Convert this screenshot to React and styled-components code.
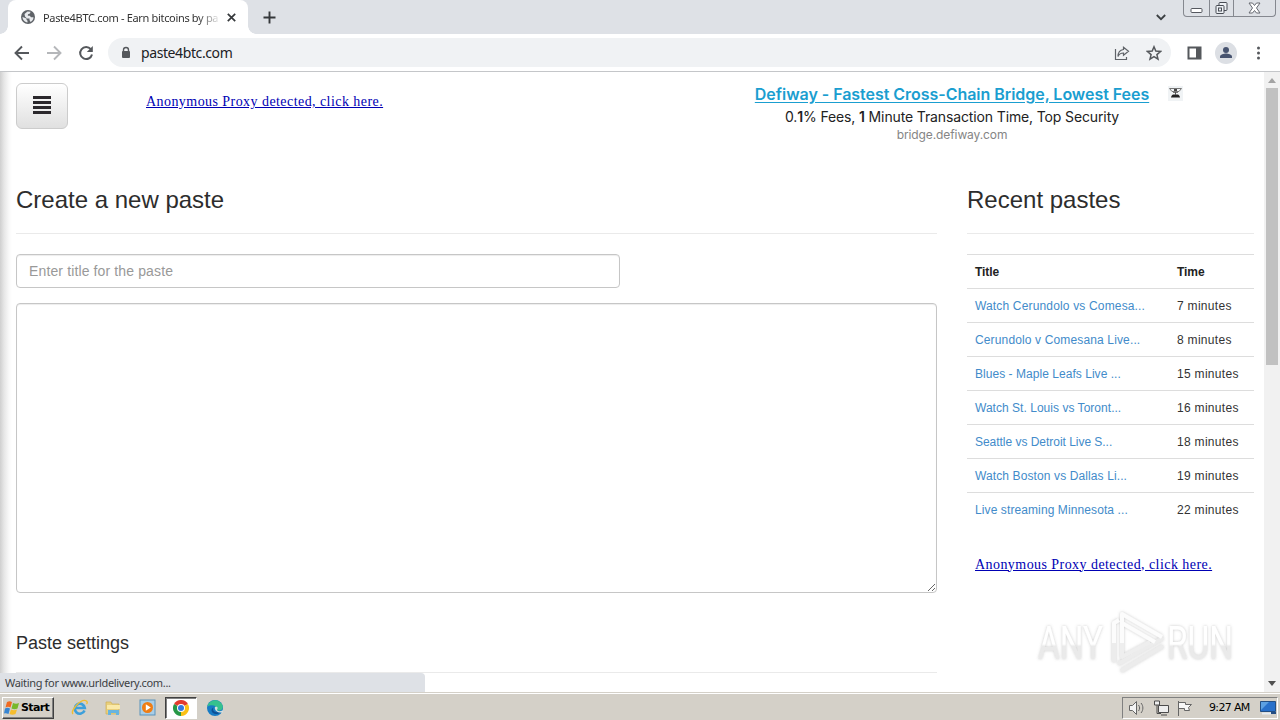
import styled, { createGlobalStyle } from "styled-components";

const GlobalStyle = createGlobalStyle`
  * {
    box-sizing: border-box;
  }

  body {
    margin: 0;
    overflow: hidden;
    background: white;
  }
`;

const Screen = styled.div`
  display: flex;
  flex-direction: column;
  width: 1280px;
  height: 720px;
  overflow: hidden;
  font-family: "Liberation Sans", Arial, sans-serif;
  color: #333;
`;

const TabStrip = styled.div`
  display: flex;
  height: 34px;
  padding-left: 8px;
  background: #dee1e6;
`;

const Tab = styled.div`
  position: relative;
  display: flex;
  align-items: center;
  width: 240px;
  padding: 0 12px 0 13px;
  background: white;
  border-radius: 8px 8px 0 0;

  &::before,
  &::after {
    content: "";
    position: absolute;
    bottom: 0;
    width: 8px;
    height: 8px;
  }

  &::before {
    left: -8px;
    background: radial-gradient(circle at 0 0, #dee1e6 7.5px, white 8px);
  }

  &::after {
    right: -8px;
    background: radial-gradient(circle at 100% 0, #dee1e6 7.5px, white 8px);
  }
`;

const TabTitle = styled.span`
  flex: 1;
  margin: 0 8px 0 8px;
  white-space: nowrap;
  font: 11px "Noto Sans", sans-serif;
  letter-spacing: -0.33px;
  color: #333;
  mask-image: linear-gradient(to right, black 155px, transparent 178px);
`;

const NewTab = styled.div`
  display: flex;
  align-items: center;
  margin-left: 15px;
`;

const TabSearch = styled.div`
  display: flex;
  align-items: center;
  margin-left: auto;
  margin-right: 17px;
`;

const WindowControls = styled.div`
  display: flex;
  width: 93px;
  height: 17px;
  margin-right: 4px;
  border: 1px solid #85888f;
  border-top: 0;
  border-radius: 0 0 4px 4px;
`;

const WindowButton = styled.div`
  display: flex;
  align-items: center;
  justify-content: center;
  width: ${(props) => props.$width}px;

  & + & {
    border-left: 1px solid #85888f;
  }
`;

const Toolbar = styled.div`
  display: flex;
  align-items: center;
  height: 38px;
  padding: 0 12px 0 14px;
  background: white;
  border-bottom: 1px solid #c4c6c9;
`;

const NavButtons = styled.div`
  display: flex;
  gap: 16px;
`;

const AddressBar = styled.div`
  display: flex;
  align-items: center;
  width: 1063px;
  height: 29px;
  margin-left: 14px;
  padding: 0 9px 0 12px;
  background: #f0f2f4;
  border-radius: 15px;
`;

const Url = styled.span`
  flex: 1;
  margin-left: 9px;
  font: 14px "Noto Sans", sans-serif;
  letter-spacing: -0.4px;
  color: #202124;
`;

const AddressIcons = styled.div`
  display: flex;
  gap: 16px;
`;

const ToolbarIcons = styled.div`
  display: flex;
  align-items: center;
  margin-left: 16px;
`;

const Avatar = styled.div`
  display: flex;
  width: 22px;
  height: 22px;
  margin: 0 15px 0 13px;
`;

const Viewport = styled.div`
  position: relative;
  display: flex;
  height: 620px;
  overflow: hidden;
`;

const Page = styled.main`
  width: 1264px;
  height: 620px;
  padding: 11px 10px 0 16px;
  overflow: hidden;
  background: linear-gradient(to right, #cfcfcf 0, #e6e6e6 4px, #f9f9f9 9px, white 12px);
`;

const Header = styled.header`
  display: flex;
  height: 89px;

  & > * {
    flex-shrink: 0;
  }
`;

const MenuButton = styled.button`
  display: flex;
  flex-direction: column;
  align-items: center;
  justify-content: center;
  gap: 2px;
  width: 52px;
  height: 46px;
  padding: 0 0 3px;
  border: 1px solid #ccc;
  border-radius: 6px;
  background: linear-gradient(#fff, #e0e0e0);
`;

const MenuLine = styled.span`
  width: 18px;
  height: 3px;
  background: #2b282c;
`;

const ProxyLink = styled.a`
  font: 14px/16px "Liberation Serif", serif;
  letter-spacing: 0.44px;
  white-space: nowrap;
  text-decoration: underline;
  color: #0000b4;
`;

const HeaderProxy = styled.div`
  width: 610px;
  padding: 9px 0 0 78px;
`;

const Advert = styled.div`
  display: flex;
  flex-direction: column;
  align-items: center;
  width: 394px;
  margin-left: 77px;
  white-space: nowrap;
`;

const AdTitle = styled.a`
  font: 600 16px/20px Inter, sans-serif;
  letter-spacing: -0.04px;
  text-decoration: underline;
  text-underline-offset: 2px;
  color: #1a9ed0;
  margin-top: 1px;
`;

const AdText = styled.div`
  font: 14px/20px Inter, sans-serif;
  letter-spacing: -0.13px;
  margin-top: 3px;
  color: #222;

  b {
    font-weight: 600;
  }
`;

const AdSite = styled.div`
  font: 12px/16px Inter, sans-serif;
  letter-spacing: -0.1px;
  color: #858585;
`;

const AdBadge = styled.div`
  margin: 3px 0 0 19px;
`;

const Columns = styled.div`
  display: flex;
  justify-content: space-between;
`;

const PasteForm = styled.section`
  width: 921px;
`;

const Recent = styled.aside`
  width: 287px;
`;

const Heading = styled.h3`
  height: 62px;
  margin: 0 0 20px;
  padding-top: 14px;
  border-bottom: 1px solid #eaeaea;
  font-size: 24px;
  font-weight: 400;
  line-height: 28px;
  color: #2d2d2d;
`;

const TitleInput = styled.input`
  display: block;
  width: 604px;
  height: 34px;
  padding: 6px 12px;
  border: 1px solid #c6c6c6;
  border-radius: 4px;
  font: 14px "Liberation Sans", Arial, sans-serif;
  letter-spacing: 0.13px;
  box-shadow: inset 0 1px 1px rgba(0, 0, 0, 0.075);

  &::placeholder {
    color: #999;
  }
`;

const PasteArea = styled.textarea`
  display: block;
  width: 921px;
  height: 290px;
  margin-top: 15px;
  border: 1px solid #c6c6c6;
  border-radius: 4px;
  box-shadow: inset 0 1px 1px rgba(0, 0, 0, 0.075);
`;

const SettingsHeading = styled.h4`
  height: 42px;
  margin: 38px 0 0;
  padding-top: 2px;
  border-bottom: 1px solid #eaeaea;
  font-size: 18px;
  font-weight: 400;
  line-height: 20px;
  color: #2d2d2d;
`;

const PasteTable = styled.table`
  width: 287px;
  border-collapse: collapse;
  table-layout: fixed;
  font-size: 12px;
  line-height: 17px;
`;

const Cell = styled.td`
  width: ${(props) => props.$width}px;
  height: 34px;
  padding: 2px 8px 0;
  border-top: 1px solid #ddd;
  text-align: left;
  white-space: nowrap;
  letter-spacing: 0.3px;
  color: #333;
`;

const HeadCell = styled(Cell)`
  letter-spacing: -0.05px;
  color: #222;
`;

const PasteLink = styled.a`
  letter-spacing: ${(props) => props.$spacing}px;
  color: #428bca;
`;

const RecentProxy = styled.div`
  padding: 28px 0 0 8px;
`;

const Scrollbar = styled.div`
  display: flex;
  flex-direction: column;
  align-items: center;
  width: 16px;
  height: 620px;
  padding: 6px 0 6px;
  background: #f1f1f1;
`;

const ScrollThumb = styled.div`
  width: 12px;
  height: 277px;
  margin-top: 5px;
  margin-bottom: auto;
  background: #c1c1c1;
`;

const StatusBubble = styled.div`
  position: absolute;
  left: 0;
  bottom: 0;
  width: 425px;
  height: 19px;
  padding-left: 5px;
  border-top-right-radius: 4px;
  background: #dee1e6;
  font: 11px/20px "Noto Sans", sans-serif;
  letter-spacing: -0.33px;
  color: #3c4043;
`;

const Watermark = styled.svg`
  position: absolute;
  left: 1030px;
  top: 533px;
`;

const Taskbar = styled.footer`
  display: flex;
  align-items: center;
  height: 28px;
  padding: 2px 2px 0;
  background: #d4d0c8;
  border-top: 1px solid #d4d0c8;
  box-shadow: inset 0 1px white;
`;

const StartButton = styled.button`
  display: flex;
  align-items: center;
  gap: 1px;
  width: 52px;
  height: 22px;
  padding: 0 1px;
  border: 1px solid;
  border-color: white #404040 #404040 white;
  box-shadow: inset -1px -1px #808080;
  background: #d4d0c8;
  font: bold 11px "DejaVu Sans", sans-serif;
  letter-spacing: -0.65px;
  color: black;
`;

const Launcher = styled.div`
  display: flex;
  align-items: center;
  justify-content: center;
  width: ${(props) => (props.$active ? 32 : 34)}px;
  height: 22px;
  margin-right: ${(props) => (props.$active ? 1 : 0)}px;
  margin-left: ${(props) => (props.$active ? 1 : 0)}px;
  border: ${(props) => (props.$active ? "1px solid" : "0")};
  border-color: #404040 white white #404040;
  box-shadow: ${(props) => (props.$active ? "inset 1px 1px #808080" : "none")};
  background: ${(props) => (props.$active ? "white" : "none")};
`;

const Launchers = styled.div`
  display: flex;
  margin-left: 8px;
`;

const Tray = styled.div`
  display: flex;
  align-items: center;
  width: 156px;
  height: 22px;
  margin-left: auto;
  padding-left: 5px;
  border: 1px solid;
  border-color: #808080 white white #808080;
`;

const Clock = styled.span`
  margin: 0 10px 0 15px;
  white-space: nowrap;
  font: 11px "DejaVu Sans", sans-serif;
  letter-spacing: -0.65px;
  color: black;
`;

const GlobeIcon = () => (
  <svg width="14" height="14" viewBox="0 0 14 14">
    <circle cx="7" cy="7" r="7" fill="#5f6368" />
    <path d="M1.500 7l4 1.500v1.200l1 1v1.800C3.500 12.200 1.500 9.500 1.500 7zM6.500 1.500l3 .2-.5 1.800-2 .8-.2 1.500h2l1.200 1.500h2.500c0 2.500-1.500 4-3 4.700L8.500 10V8.500H6L4 6.500 3.500 4z" fill="#e8eaed" />
  </svg>
);

const CloseIcon = () => (
  <svg width="9" height="9" viewBox="0 0 9 9" stroke="#35383b" strokeWidth="1.700">
    <path d="M.8.8l7.400 7.400M8.200.8L.8 8.200" />
  </svg>
);

const ArrowIcon = ({ color, flip }) => (
  <svg width="16" height="16" viewBox="0 0 16 16" fill="none" stroke={color} strokeWidth="1.900">
    <path d={flip ? "M1 8h13M8 1.500L14.500 8 8 14.500" : "M15 8H2M8 1.500L1.500 8 8 14.500"} />
  </svg>
);

const ReloadIcon = () => (
  <svg width="16" height="16" viewBox="0 0 16 16">
    <path d="M12.800 4.200A6 6 0 1 0 14 9.500" fill="none" stroke="#55585c" strokeWidth="2" />
    <path d="M14.800 1v6H8.800z" fill="#55585c" />
  </svg>
);

const LockIcon = () => (
  <svg width="12" height="14" viewBox="0 0 12 14">
    <path d="M3.500 6V4a2.500 2.500 0 0 1 5 0v2" fill="none" stroke="#55585c" strokeWidth="1.400" />
    <rect x="2" y="5" width="8" height="7" rx="1" fill="#55585c" />
  </svg>
);

const ShareIcon = () => (
  <svg width="16" height="16" viewBox="0 0 16 16" fill="none" stroke="#5f6368" strokeWidth="1.200">
    <path d="M1.500 4v10.500h11V12M9.500 2.200l5 4-5 4V8C7 8 5 9 4 11.500c0-4 2-6.500 5.500-7z" />
  </svg>
);

const StarIcon = () => (
  <svg width="16" height="16" viewBox="0 0 16 16" fill="none" stroke="#55585c" strokeWidth="1.500">
    <path d="M8 1.800l1.800 4.300 4.700.4-3.600 3.100 1.100 4.600-4-2.500-4 2.500 1.100-4.600-3.600-3.100 4.700-.4z" />
  </svg>
);

const WatermarkLogo = () => (
  <Watermark width="210" height="72" viewBox="0 0 210 72">
    <defs>
      <filter id="glow" x="-10%" y="-10%" width="120%" height="120%">
        <feDropShadow dx="0" dy="0" stdDeviation="1.800" floodColor="#888" floodOpacity=".45" />
      </filter>
      <linearGradient id="fade" x2="0" y2="1">
        <stop offset=".52" stopColor="#fff" />
        <stop offset=".56" stopColor="#eaeaea" />
      </linearGradient>
    </defs>
    <g filter="url(#glow)" fill="none" strokeWidth="4" strokeLinejoin="round">
      <g fill="url(#fade)" fontFamily="Roboto, sans-serif" fontSize="46">
        <text x="8" y="54" textLength="65" lengthAdjust="spacingAndGlyphs">ANY</text>
        <text x="137" y="54" textLength="66" lengthAdjust="spacingAndGlyphs">RUN</text>
      </g>
      <path d="M84 17v40M88 59l45-26M91 66l42-25" stroke="#ececec" />
      <path d="M84 38V18l5-3M92 52V9l40 23" stroke="#fcfcfc" />
      <path d="M92 38v14l28-15" stroke="#eee" />
      <path d="M92 18l33 19" stroke="#fcfcfc" />
    </g>
  </Watermark>
);

const StartLogo = () => (
  <svg width="16" height="16" viewBox="0 0 16 16">
    <path d="M3 2c2-1 3-1 5 0L6.500 7.500c-2-1-3-1-5 0z" fill="#f06a20" />
    <path d="M9 3c2 1 4 1 6 0l-1.500 5.500c-2 1-4 1-6 0z" fill="#78b82c" />
    <path d="M1 8.500c2-1 3-1 5 0L4.500 14c-2-1-3-1-4.500-.5z" fill="#3785d2" />
    <path d="M7 9.500c2 1 4 1 6 0L11.500 14c-2 1-4 1-6 0z" fill="#f6bd2e" />
  </svg>
);

const ExplorerIcon = () => (
  <svg width="17" height="17" viewBox="0 0 17 17" fill="none">
    <path d="M13.500 11.500A5 5 0 1 1 13.800 9H4" stroke="#3c9fdb" strokeWidth="2.600" />
    <path d="M2 15C-1 12 10-1 15.500 2c1 1 .5 2.500 0 3" stroke="#efbd32" strokeWidth="1.300" />
  </svg>
);

const FolderIcon = () => (
  <svg width="18" height="17" viewBox="0 0 18 17">
    <path d="M2 3h5l1 2h7v10H2z" fill="#e9cf7c" stroke="#cfb058" strokeWidth=".7" />
    <path d="M3 6h13v4H3z" fill="#fae9a8" />
    <path d="M4 16v-5h11v5h-3v-2H7v2z" fill="#67b4df" />
  </svg>
);

const PlayerIcon = () => (
  <svg width="17" height="17" viewBox="0 0 17 17">
    <rect x="1" y="1" width="15" height="15" fill="#a9cee7" stroke="#5b93bb" />
    <circle cx="8.500" cy="8.500" r="5.500" fill="#ef7d14" />
    <path d="M6.800 5.200l5 3.300-5 3.300z" fill="white" />
  </svg>
);

const ChromeIcon = () => (
  <svg width="16" height="16" viewBox="0 0 16 16">
    <path d="M8 8L1.070 4A8 8 0 0 1 14.930 4z" fill="#e33b2e" />
    <path d="M8 8V16A8 8 0 0 1 1.070 4z" fill="#279847" />
    <path d="M8 8L14.930 4A8 8 0 0 1 8 16z" fill="#fbc116" />
    <circle cx="8" cy="8" r="4" fill="white" />
    <circle cx="8" cy="8" r="3" fill="#3479e0" />
  </svg>
);

const EdgeIcon = () => (
  <svg width="16" height="16" viewBox="0 0 16 16">
    <circle cx="8" cy="8" r="8" fill="#167bc4" />
    <path d="M.3 6.500C2 0 9-1.500 13 2c3 2.500 4 6 1 8-2 1.200-4.500.5-4.500-1C10 5 4 4 .3 6.500z" fill="#36c18e" />
    <path d="M6.500 7.500c-2 4 3 6 7.500 4-3 4-9 3-9.500-1 0-1.500.8-2.500 2-3z" fill="#0d4f94" />
    <path d="M8 7c2-1 3.500.5 2 2.500 0 2 3 2 5.500 1l1-.5v2.500h-2C10 13 7 9.500 8 7z" fill="#d4e0e0" />
  </svg>
);

const TrayIcons = () => (
  <svg width="66" height="18" viewBox="0 0 66 18" fill="none" stroke="#666">
    <path d="M1.500 6.500h3l4-4v13l-4-4h-3z" fill="#f4f4f4" />
    <path d="M10.500 6c1.500 2 1.500 4 0 6M13 4c2.500 3 2.500 7 0 10" />
    <path d="M30.500 6.500h10v7h-10zM33 16h6M26.500 2v4h5V2z" fill="#eee" stroke="#4c4c4c" />
    <path d="M29 6v8.500h4" stroke="#4c4c4c" />
    <path d="M50.500 2v15M50.500 3.500h7v2h6l-3 3 1 3h-5v-2h-6z" fill="#f7f7f7" />
  </svg>
);

const pastes = [
  { title: "Watch Cerundolo vs Comesa...", time: "7 minutes", spacing: 0.16 },
  { title: "Cerundolo v Comesana Live...", time: "8 minutes", spacing: 0.14 },
  { title: "Blues - Maple Leafs Live ...", time: "15 minutes", spacing: 0.04 },
  { title: "Watch St. Louis vs Toront...", time: "16 minutes", spacing: 0.03 },
  { title: "Seattle vs Detroit Live S...", time: "18 minutes", spacing: -0.03 },
  { title: "Watch Boston vs Dallas Li...", time: "19 minutes", spacing: 0.11 },
  { title: "Live streaming Minnesota ...", time: "22 minutes", spacing: 0.1 },
];

const BrowserTop = () => (
  <>
    <TabStrip>
      <Tab>
        <GlobeIcon />
        <TabTitle>Paste4BTC.com - Earn bitcoins by pa</TabTitle>
        <CloseIcon />
      </Tab>
      <NewTab>
        <svg width="13" height="13" viewBox="0 0 13 13" stroke="#35383b" strokeWidth="1.900">
          <path d="M6.500.5v12M.5 6.500h12" />
        </svg>
      </NewTab>
      <TabSearch>
        <svg width="10" height="7" viewBox="0 0 10 7" fill="none" stroke="#3c4043" strokeWidth="1.800">
          <path d="M.8 1L5 5.200 9.200 1" />
        </svg>
      </TabSearch>
      <WindowControls>
        <WindowButton $width={25}>
          <svg width="13" height="15" viewBox="0 0 13 15">
            <rect x="1" y="7.500" width="11" height="4" rx="1" fill="white" stroke="#55585f" />
          </svg>
        </WindowButton>
        <WindowButton $width={25}>
          <svg width="13" height="15" viewBox="0 0 13 15" fill="#edf0f4" stroke="#484c54">
            <rect x="4" y="1.500" width="8" height="8" rx="1" />
            <rect x="1" y="4.500" width="8" height="8" rx="1" />
            <rect x="3.500" y="7" width="3" height="3" />
          </svg>
        </WindowButton>
        <WindowButton $width={42}>
          <svg width="13" height="12" viewBox="0 0 13 12">
            <path d="M1 1h3.500l2 2.500 2-2.500H12L8.500 6l3.500 5H8.500l-2-2.500-2 2.500H1l3.500-5z" fill="white" stroke="#666971" />
          </svg>
        </WindowButton>
      </WindowControls>
    </TabStrip>
    <Toolbar>
      <NavButtons>
        <ArrowIcon color="#55585c" />
        <ArrowIcon color="#b5b7ba" flip />
        <ReloadIcon />
      </NavButtons>
      <AddressBar>
        <LockIcon />
        <Url>paste4btc.com</Url>
        <AddressIcons>
          <ShareIcon />
          <StarIcon />
        </AddressIcons>
      </AddressBar>
      <ToolbarIcons>
        <svg width="15" height="14" viewBox="0 0 15 14">
          <path d="M1.500 1.500h12v11h-12z" fill="none" stroke="#55585c" strokeWidth="2" />
          <path d="M9 1h5v12H9z" fill="#55585c" />
        </svg>
        <Avatar>
          <svg width="22" height="22" viewBox="0 0 22 22">
            <circle cx="11" cy="11" r="11" fill="#dcdfe4" />
            <circle cx="11" cy="8" r="3" fill="#47536f" />
            <path d="M5 16v-1.500c0-2 4-3 6-3s6 1 6 3V16z" fill="#47536f" />
          </svg>
        </Avatar>
        <svg width="13" height="14" viewBox="0 0 13 14" fill="#55585c">
          <circle cx="6.500" cy="2" r="1.500" />
          <circle cx="6.500" cy="7" r="1.500" />
          <circle cx="6.500" cy="12" r="1.500" />
        </svg>
      </ToolbarIcons>
    </Toolbar>
  </>
);

const PageHeader = () => (
  <Header>
    <MenuButton>
      <MenuLine />
      <MenuLine />
      <MenuLine />
      <MenuLine />
    </MenuButton>
    <HeaderProxy>
      <ProxyLink>Anonymous Proxy detected, click here.</ProxyLink>
    </HeaderProxy>
    <Advert>
      <AdTitle>Defiway - Fastest Cross-Chain Bridge, Lowest Fees</AdTitle>
      <AdText>
        0.<b>1</b>% Fees, <b>1</b> Minute Transaction Time, Top Security
      </AdText>
      <AdSite>bridge.defiway.com</AdSite>
    </Advert>
    <AdBadge>
      <svg width="15" height="15" viewBox="0 0 15 15">
        <path d="M0 0h15v15H0z" fill="#f0f3f5" />
        <path d="M1.500 2.500h12L11 5.500H4zM5 6.500h5" fill="none" stroke="#777" />
        <path d="M6 3h3v2H6z" fill="#444" />
        <path d="M3 11.500c0-1 1-2.500 2-3h5c1 .5 2 2 2 3z" fill="#222" />
        <path d="M7 6h1v3H7z" fill="#555" />
      </svg>
    </AdBadge>
  </Header>
);

const RecentPastes = () => (
  <Recent>
    <Heading>Recent pastes</Heading>
    <PasteTable>
      <thead>
        <tr>
          <HeadCell as="th" $width={202}>
            Title
          </HeadCell>
          <HeadCell as="th">Time</HeadCell>
        </tr>
      </thead>
      <tbody>
        {pastes.map((paste) => (
          <tr key={paste.title}>
            <Cell>
              <PasteLink $spacing={paste.spacing}>{paste.title}</PasteLink>
            </Cell>
            <Cell>{paste.time}</Cell>
          </tr>
        ))}
      </tbody>
    </PasteTable>
    <RecentProxy>
      <ProxyLink>Anonymous Proxy detected, click here.</ProxyLink>
    </RecentProxy>
  </Recent>
);

const App = () => {
  return (
    <Screen>
      <GlobalStyle />
      <BrowserTop />
      <Viewport>
        <Page>
          <PageHeader />
          <Columns>
            <PasteForm>
              <Heading>Create a new paste</Heading>
              <TitleInput placeholder="Enter title for the paste" />
              <PasteArea />
              <SettingsHeading>Paste settings</SettingsHeading>
            </PasteForm>
            <RecentPastes />
          </Columns>
        </Page>
        <Scrollbar>
          <svg width="8" height="5" viewBox="0 0 8 5">
            <path d="M0 5l4-5 4 5z" fill="#a3a3a3" />
          </svg>
          <ScrollThumb />
          <svg width="8" height="5" viewBox="0 0 8 5">
            <path d="M0 0l4 5 4-5z" fill="#505050" />
          </svg>
        </Scrollbar>
        <StatusBubble>Waiting for www.urldelivery.com...</StatusBubble>
        <WatermarkLogo />
      </Viewport>
      <Taskbar>
        <StartButton>
          <StartLogo />
          Start
        </StartButton>
        <Launchers>
          <Launcher>
            <ExplorerIcon />
          </Launcher>
          <Launcher>
            <FolderIcon />
          </Launcher>
          <Launcher>
            <PlayerIcon />
          </Launcher>
          <Launcher $active>
            <ChromeIcon />
          </Launcher>
          <Launcher>
            <EdgeIcon />
          </Launcher>
        </Launchers>
        <Tray>
          <TrayIcons />
          <Clock>9:27 AM</Clock>
          <svg width="16" height="14" viewBox="0 0 16 14">
            <path d="M.5.5h15v10H.5z" fill="#2870ca" stroke="#234f84" />
            <path d="M1 1h8L1 9z" fill="#5ca0e2" />
            <path d="M2 11.500h9v2H2z" fill="#e7edf2" />
            <path d="M11 11h5v2h-5z" fill="#244d83" />
          </svg>
        </Tray>
      </Taskbar>
    </Screen>
  );
};

export default App;
